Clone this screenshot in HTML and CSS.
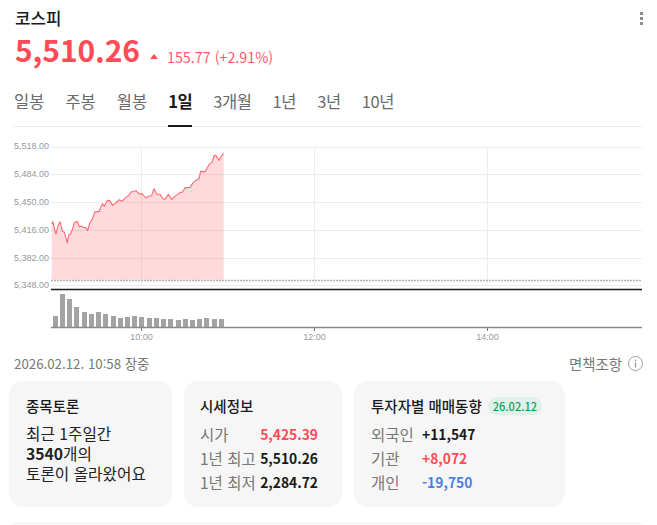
FILE: index.html
```html
<!DOCTYPE html>
<html lang="ko">
<head>
<meta charset="utf-8">
<title>코스피</title>
<link rel="stylesheet" href="styles.css">
</head>
<body>
<main class="page">
  <header class="head">
    <div class="title-row">
      <h1 class="title">코스피</h1>
      <span class="more"><i></i><i></i><i></i></span>
    </div>
    <div class="price-row">
      <span class="price">5,510.26</span>
      <span class="arrow"></span>
      <span class="change">155.77 (+2.91%)</span>
    </div>
  </header>
  <nav class="tabs">
    <a class="tab">일봉</a>
    <a class="tab">주봉</a>
    <a class="tab">월봉</a>
    <a class="tab num active">1일</a>
    <a class="tab num">3개월</a>
    <a class="tab num">1년</a>
    <a class="tab num">3년</a>
    <a class="tab num">10년</a>
  </nav>
  <svg class="chart" width="657" height="215" viewBox="0 0 657 215" xmlns="http://www.w3.org/2000/svg">
    <g class="grid">
      <path d="M51 12.5H642M51 39.5H642M51 67.5H642M51 95.5H642M51 123.5H642M51 150.5H642"/>
      <path d="M141.500 12V150M314.500 12V150M487.500 12V150"/>
    </g>
    <g transform="scale(.33333)">
      <path class="area" d="M155 133L159 125L163 145L168 162L173 140L180 125L187 153L193 157L197 170L202 189L206 165L212 162L218 145L223 128L232 124L238 140L244 139L250 142L257 143L263 152L270 127L276 120L285 95L297 95L307 71L313 79L322 61L329 62L338 76L347 69L358 59L366 64L378 52L385 47L395 35L408 32L418 42L426 41L438 54L445 49L455 47L462 26L470 42L480 43L490 57L495 58L505 43L515 58L525 49L540 37L548 36L555 23L570 22L580 7L590 0L597 -4L602 -26L615 -25L628 -47L637 -55L642 -73L648 -73L657 -59L665 -73L671 -80V299H155Z" transform="translate(0 135)"/>
      <path class="line" transform="translate(0 135)" d="M155 133L159 125L163 145L168 162L173 140L180 125L187 153L193 157L197 170L202 189L206 165L212 162L218 145L223 128L232 124L238 140L244 139L250 142L257 143L263 152L270 127L276 120L285 95L297 95L307 71L313 79L322 61L329 62L338 76L347 69L358 59L366 64L378 52L385 47L395 35L408 32L418 42L426 41L438 54L445 49L455 47L462 26L470 42L480 43L490 57L495 58L505 43L515 58L525 49L540 37L548 36L555 23L570 22L580 7L590 0L597 -4L602 -26L615 -25L628 -47L637 -55L642 -73L648 -73L657 -59L665 -73L671 -80"/>
    </g>
    <path class="base-dots" d="M51 145.500H642"/>
    <path class="axis-top" d="M51 154.500H642"/>
    <g class="bars">
      <rect x="53" y="181" width="5" height="11"/>
      <rect x="60" y="159" width="5" height="33"/>
      <rect x="67" y="164" width="5" height="28"/>
      <rect x="74" y="172" width="5" height="20"/>
      <rect x="82" y="177" width="5" height="15"/>
      <rect x="89" y="179" width="5" height="13"/>
      <rect x="96" y="177" width="5" height="15"/>
      <rect x="103" y="179" width="5" height="13"/>
      <rect x="111" y="181" width="5" height="11"/>
      <rect x="118" y="183" width="5" height="9"/>
      <rect x="125" y="182" width="5" height="10"/>
      <rect x="132" y="181" width="5" height="11"/>
      <rect x="139" y="182" width="5" height="10"/>
      <rect x="147" y="183" width="5" height="9"/>
      <rect x="154" y="183" width="5" height="9"/>
      <rect x="161" y="184" width="5" height="8"/>
      <rect x="168" y="184" width="5" height="8"/>
      <rect x="176" y="185" width="5" height="7"/>
      <rect x="183" y="184" width="5" height="8"/>
      <rect x="190" y="185" width="5" height="7"/>
      <rect x="197" y="184" width="5" height="8"/>
      <rect x="204" y="183" width="5" height="9"/>
      <rect x="212" y="184" width="5" height="8"/>
      <rect x="219" y="184" width="5" height="8"/>
    </g>
    <path class="axis-bottom" d="M51 192.500H642"/>
    <path class="tick" d="M141.500 192V196M314.500 192V196M487.500 192V196"/>
    <g class="ylabels">
      <text x="14" y="14">5,518.00</text>
      <text x="14" y="42">5,484.00</text>
      <text x="14" y="70">5,450.00</text>
      <text x="14" y="98">5,416.00</text>
      <text x="14" y="126">5,382.00</text>
      <text x="14" y="153">5,348.00</text>
    </g>
    <g class="xlabels">
      <text x="141.500" y="205">10:00</text>
      <text x="314.500" y="205">12:00</text>
      <text x="487.500" y="205">14:00</text>
    </g>
  </svg>
  <div class="meta">
    <span>2026.02.12. 10:58 장중</span>
    <span class="disclaimer">면책조항
      <svg class="info" width="15" height="15" viewBox="0 0 15 15" xmlns="http://www.w3.org/2000/svg">
        <circle cx="7.500" cy="7.500" r="7" fill="none" stroke="#a0a0a0"/>
        <path d="M7.500 6.500V11.500" stroke="#909090" stroke-width="1.200"/>
        <circle cx="7.500" cy="4.300" r=".8" fill="#909090"/>
      </svg>
    </span>
  </div>
  <section class="cards">
    <article class="card card-talk">
      <h2 class="card-title">종목토론</h2>
      <p class="talk">최근 1주일간<br><b>3540</b>개의<br>토론이 올라왔어요</p>
    </article>
    <article class="card card-quote">
      <h2 class="card-title">시세정보</h2>
      <dl class="rows">
        <div class="row"><dt>시가</dt><dd class="up">5,425.39</dd></div>
        <div class="row"><dt>1년 최고</dt><dd>5,510.26</dd></div>
        <div class="row"><dt>1년 최저</dt><dd>2,284.72</dd></div>
      </dl>
    </article>
    <article class="card card-trend">
      <h2 class="card-title">투자자별 매매동향 <span class="badge">26.02.12</span></h2>
      <dl class="rows rows-left">
        <div class="row"><dt>외국인</dt><dd>+11,547</dd></div>
        <div class="row"><dt>기관</dt><dd class="up">+8,072</dd></div>
        <div class="row"><dt>개인</dt><dd class="down">-19,750</dd></div>
      </dl>
    </article>
  </section>
  <div class="end-rule"></div>
</main>
</body>
</html>
```
FILE: styles.css
```css
* { box-sizing: border-box; }
html, body { margin: 0; padding: 0; }
body {
  width: 657px;
  height: 525px;
  overflow: hidden;
  background: #fff;
  color: #191919;
  font-family: "Noto Sans CJK KR", "Noto Sans", sans-serif;
}
.page { display: flex; flex-direction: column; width: 657px; }

.head { padding: 7px 15px 0; }
.title-row { display: flex; justify-content: space-between; align-items: center; height: 22px; }
.title { margin: 0; font-size: 16.800px; font-weight: 500; line-height: 22px; }
.more { display: flex; flex-direction: column; gap: 2px; margin-right: -1px; }
.more i { display: block; width: 3px; height: 3px; background: #8c8c8c; }
.price-row { display: flex; align-items: center; height: 40px; }
.price { font-size: 30px; font-weight: 700; color: #ff4b55; line-height: 40px; letter-spacing: -.1px; }
.arrow { width: 0; height: 0; margin: 15px 9px 0 10px; border: 4.500px solid transparent; border-top: 0; border-bottom: 5px solid #ff4b55; }
.change { font-size: 14.300px; color: #ff5a64; margin-top: 14px; }

.tabs { display: flex; gap: 21px; margin: 11px 15px 0 13px; padding-left: 1px; height: 47px; border-bottom: 1px solid #eee; }
.tab { height: 47px; font-size: 16.500px; line-height: 42px; color: #6b6b6b; }
.tab.num { letter-spacing: -.4px; }
.tab.active { color: #191919; font-weight: 700; border-bottom: 2px solid #191919; }

.chart { display: block; width: 657px; height: 215px; margin-top: 8px; }
.grid path { fill: none; stroke: #ededed; stroke-width: 1; }
.area { fill: rgba(255, 70, 85, .2); }
.line { fill: none; stroke: #ff6a72; stroke-width: 1.100; vector-effect: non-scaling-stroke; stroke-linejoin: round; }
.base-dots { stroke: #b9aeb0; stroke-width: 1.500; stroke-dasharray: 2 1; fill: none; }
.axis-top { stroke: #1a1a1a; stroke-width: 1.300; fill: none; }
.axis-bottom { stroke: #8a8a8a; stroke-width: 1.500; fill: none; }
.tick { stroke: #777; stroke-width: 1; fill: none; }
.bars rect { fill: #a3a3a3; }
.ylabels text, .xlabels text { font-family: "Liberation Sans", sans-serif; font-size: 9px; fill: #999; }
.xlabels text { text-anchor: middle; }

.meta { display: flex; justify-content: space-between; align-items: center; height: 20px; margin-top: 3px; padding: 0 14px; font-size: 13.300px; color: #777; }
.disclaimer { display: flex; align-items: center; gap: 6px; font-size: 14.400px; }
.info { display: block; }

.cards { display: flex; gap: 12px; margin: 8px 0 0 9px; }
.card { height: 126px; padding: 15px 17px 0; background: #f6f6f6; border-radius: 14px; }
.card-talk { width: 163px; }
.card-quote { width: 158px; padding: 15px 24px 0 16px; }
.card-trend { width: 211px; }
.card-title { display: flex; align-items: center; gap: 6px; margin: 0; height: 20px; font-size: 14.500px; font-weight: 500; line-height: 20px; white-space: nowrap; }
.talk { margin: 8px 0 0; font-size: 15.700px; line-height: 20px; color: #222; }
.talk b { font-weight: 700; }
.rows { margin: 6px 0 0; }
.row { display: flex; justify-content: space-between; align-items: center; height: 24px; }
.row dt { font-size: 15.500px; color: #777; white-space: nowrap; }
.row dd { margin: 0; font-size: 13.800px; font-weight: 700; color: #191919; }
.rows-left .row { justify-content: flex-start; }
.rows-left dt { width: 51px; }
.up { color: #ff4b55 !important; }
.down { color: #4a80e8 !important; }
.badge { display: inline-block; height: 18px; padding: 0 5px; border-radius: 9px; background: #dff1e8; color: #0aa160; font-size: 11px; font-weight: 500; line-height: 18px; }

.end-rule { height: 1px; margin: 16px 15px 0 13px; background: #f0f0f0; }
```
